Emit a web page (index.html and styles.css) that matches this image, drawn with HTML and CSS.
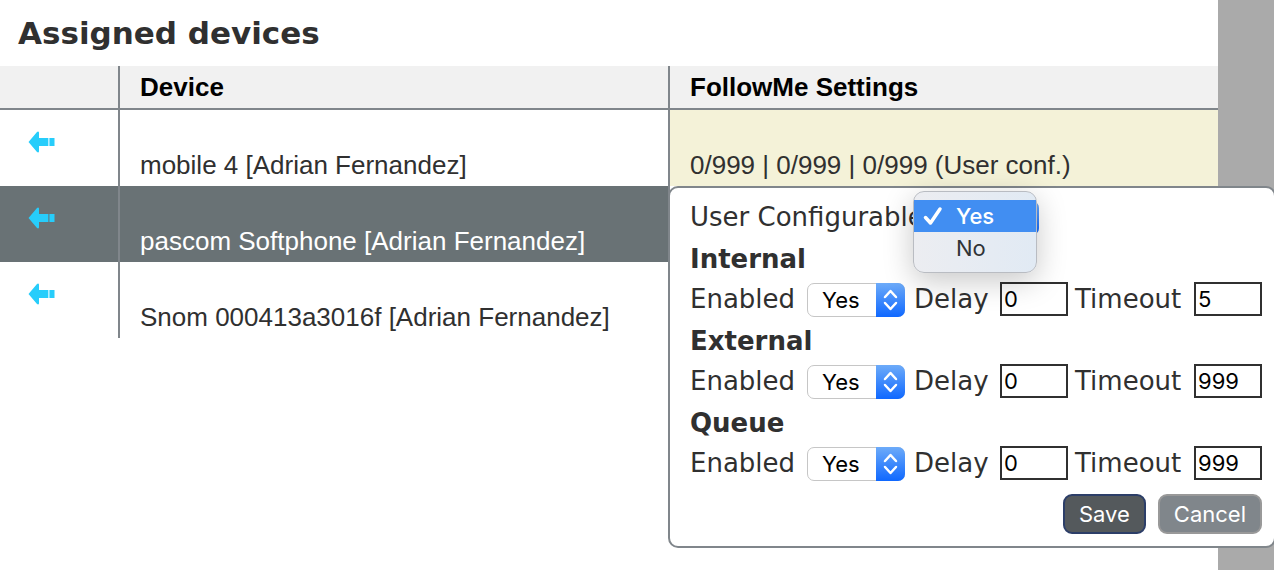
FILE: index.html
```html
<!DOCTYPE html>
<html lang="en">
<head>
<meta charset="utf-8">
<title>Assigned devices</title>
<link rel="stylesheet" href="styles.css">
</head>
<body>
<svg class="sprite" aria-hidden="true">
  <symbol id="arrow" viewBox="0 0 28 24"><path d="M.5 12 9 2q1.500-1 2 .5V8h9v8h-9v5.500q-.5 1.500-2 .5zM21.500 8h5v8h-5z"/><path opacity=".35" d="M20 8h1.500v8H20z"/></symbol>
</svg>
<main class="page">
  <h1 class="title">Assigned devices</h1>
  <table class="devices">
    <colgroup><col class="col-action"><col class="col-device"><col></colgroup>
    <thead>
      <tr><th></th><th scope="col">Device</th><th scope="col">FollowMe Settings</th></tr>
    </thead>
    <tbody>
      <tr>
        <td class="action"><button type="button" class="assign" aria-label="Unassign mobile 4"><svg><use href="#arrow"/></svg></button></td>
        <td>mobile 4 [Adrian Fernandez]</td>
        <td class="edited">0/999 | 0/999 | 0/999 (User conf.)</td>
      </tr>
      <tr class="selected">
        <td class="action"><button type="button" class="assign" aria-label="Unassign pascom Softphone"><svg><use href="#arrow"/></svg></button></td>
        <td>pascom Softphone [Adrian Fernandez]</td>
        <td class="anchor">
          <form class="popup">
            <div class="line configurable">
              <label for="uc">User Configurable</label>
              <span class="picker">
                <select id="uc"><option>Yes</option><option>No</option></select>
                <svg class="chevrons" viewBox="0 0 29 34"><path d="m9 14 5.500-6 5.500 6M9 20l5.500 6 5.500-6"/></svg>
              </span>
              <ul class="menu" role="listbox" aria-label="User Configurable">
                <li class="option active" role="option" aria-selected="true"><svg class="check" viewBox="0 0 20 20"><path d="m2.500 11.500 5 5.500L17 3"/></svg>Yes</li>
                <li class="option" role="option" aria-selected="false">No</li>
              </ul>
            </div>
            <h2 class="line group">Internal</h2>
            <div class="line fields">
              <label for="ie">Enabled</label>
              <span class="picker"><select id="ie"><option>Yes</option><option>No</option></select><svg class="chevrons" viewBox="0 0 29 34"><path d="m9 14 5.500-6 5.500 6M9 20l5.500 6 5.500-6"/></svg></span>
              <label for="id">Delay</label><input id="id" type="text" value="0">
              <label for="it">Timeout</label><input id="it" type="text" value="5">
            </div>
            <h2 class="line group">External</h2>
            <div class="line fields">
              <label for="ee">Enabled</label>
              <span class="picker"><select id="ee"><option>Yes</option><option>No</option></select><svg class="chevrons" viewBox="0 0 29 34"><path d="m9 14 5.500-6 5.500 6M9 20l5.500 6 5.500-6"/></svg></span>
              <label for="ed">Delay</label><input id="ed" type="text" value="0">
              <label for="et">Timeout</label><input id="et" type="text" value="999">
            </div>
            <h2 class="line group">Queue</h2>
            <div class="line fields">
              <label for="qe">Enabled</label>
              <span class="picker"><select id="qe"><option>Yes</option><option>No</option></select><svg class="chevrons" viewBox="0 0 29 34"><path d="m9 14 5.500-6 5.500 6M9 20l5.500 6 5.500-6"/></svg></span>
              <label for="qd">Delay</label><input id="qd" type="text" value="0">
              <label for="qt">Timeout</label><input id="qt" type="text" value="999">
            </div>
            <div class="buttons">
              <button type="button" class="button save">Save</button>
              <button type="button" class="button cancel">Cancel</button>
            </div>
          </form>
        </td>
      </tr>
      <tr>
        <td class="action"><button type="button" class="assign" aria-label="Unassign Snom 000413a3016f"><svg><use href="#arrow"/></svg></button></td>
        <td>Snom 000413a3016f [Adrian Fernandez]</td>
        <td></td>
      </tr>
    </tbody>
  </table>
</main>
</body>
</html>
```
FILE: styles.css
```css
* {
  box-sizing: border-box;
}

body {
  margin: 0;
  background: #aaa;
  color: #303030;
  font: 26px/30px "Liberation Sans", Arial, sans-serif;
  overflow: hidden;
}

.sprite {
  display: none;
}

.page {
  min-height: 100vh;
  margin-right: 56px;
  background: #fff;
}

.title {
  margin: 0;
  padding: 13px 18px;
  font: bold 31px/40px Verdana, "DejaVu Sans", sans-serif;
}

.devices {
  width: 100%;
  table-layout: fixed;
  border-spacing: 0;
}

.col-action {
  width: 118px;
}

.col-device {
  width: 550px;
}

th {
  height: 44px;
  padding: 0 20px;
  border-bottom: 2px solid #80868b;
  background: #f1f1f1;
  color: #000;
  text-align: left;
}

td {
  height: 76px;
  padding: 0 20px 6px;
  vertical-align: bottom;
}

th + th,
td + td {
  border-left: 2px solid #80868b;
}

.action {
  padding: 20px 28px 0;
  vertical-align: top;
}

.assign {
  display: block;
  width: 28px;
  height: 24px;
  padding: 0;
  border: 0;
  background: none;
}

.assign svg {
  display: block;
  width: 28px;
  height: 24px;
  fill: #27cdfb;
}

.edited {
  background: #f4f2d8;
}

.selected td {
  background: #697275;
  color: #fff;
}

.selected .anchor {
  position: relative;
  background: #fff;
}

.popup {
  position: absolute;
  top: 0;
  right: -58px;
  left: -2px;
  padding: 9px 12px 12px 20px;
  border: 2px solid #80868b;
  border-radius: 10px;
  background: #fff;
  color: #303030;
  font: 26px/41px Verdana, "DejaVu Sans", sans-serif;
}

.line {
  height: 41px;
}

.configurable {
  position: relative;
  display: grid;
  grid-template-columns: 251px 98px;
  align-items: center;
}

.group {
  margin: 0;
  font-size: 26px;
  line-height: 43px;
}

.fields {
  display: grid;
  grid-template-columns: 117px 107px 86px 75px 119px 68px;
  align-items: center;
}

.picker {
  position: relative;
  display: block;
  width: 98px;
  height: 34px;
}

.picker select {
  display: block;
  width: 100%;
  height: 100%;
  padding: 0 30px 0 14px;
  appearance: none;
  border: 1px solid #c6c6c6;
  border-radius: 7px;
  background: #fff;
  color: #000;
  font: 22px/32px Inter, sans-serif;
}

.chevrons {
  position: absolute;
  top: 0;
  right: 0;
  width: 29px;
  height: 34px;
  border-radius: 0 7px 7px 0;
  background: linear-gradient(#6dabf9, #0f68ff);
  fill: none;
  stroke: #fff;
  stroke-width: 2.500;
  stroke-linecap: round;
  stroke-linejoin: round;
  pointer-events: none;
}

.fields input {
  width: 68px;
  height: 34px;
  margin-bottom: 2px;
  padding: 2px;
  border: 2px solid #303030;
  border-radius: 0;
  background: transparent;
  color: #000;
  font: 22px/26px Inter, sans-serif;
}

.menu {
  position: absolute;
  top: -6px;
  left: 223px;
  z-index: 1;
  width: 124px;
  margin: 0;
  padding: 8px 0;
  border: 1px solid #b9bcc2;
  border-radius: 11px;
  background: linear-gradient(90deg, #ecedf1, #e1eaf4);
  box-shadow: 0 8px 30px rgba(0, 0, 0, 0.22);
  list-style: none;
}

.option {
  position: relative;
  padding-left: 42px;
  color: #303336;
  font: 22px/32px Inter, sans-serif;
}

.active {
  background: #418ef2;
  color: #fff;
  font-weight: 500;
}

.check {
  position: absolute;
  top: 6px;
  left: 9px;
  width: 20px;
  height: 20px;
  fill: none;
  stroke: #fff;
  stroke-width: 3.500;
  stroke-linecap: round;
  stroke-linejoin: round;
}

.buttons {
  display: flex;
  justify-content: flex-end;
  gap: 12px;
  padding-top: 10px;
}

.button {
  height: 40px;
  padding: 0 14px;
  border: 2px solid #999;
  border-radius: 9px;
  background: #80868b;
  color: #fff;
  font: 22px/36px Inter, sans-serif;
}

.save {
  border-color: #2c3e68;
  background: #54595c;
}
```
